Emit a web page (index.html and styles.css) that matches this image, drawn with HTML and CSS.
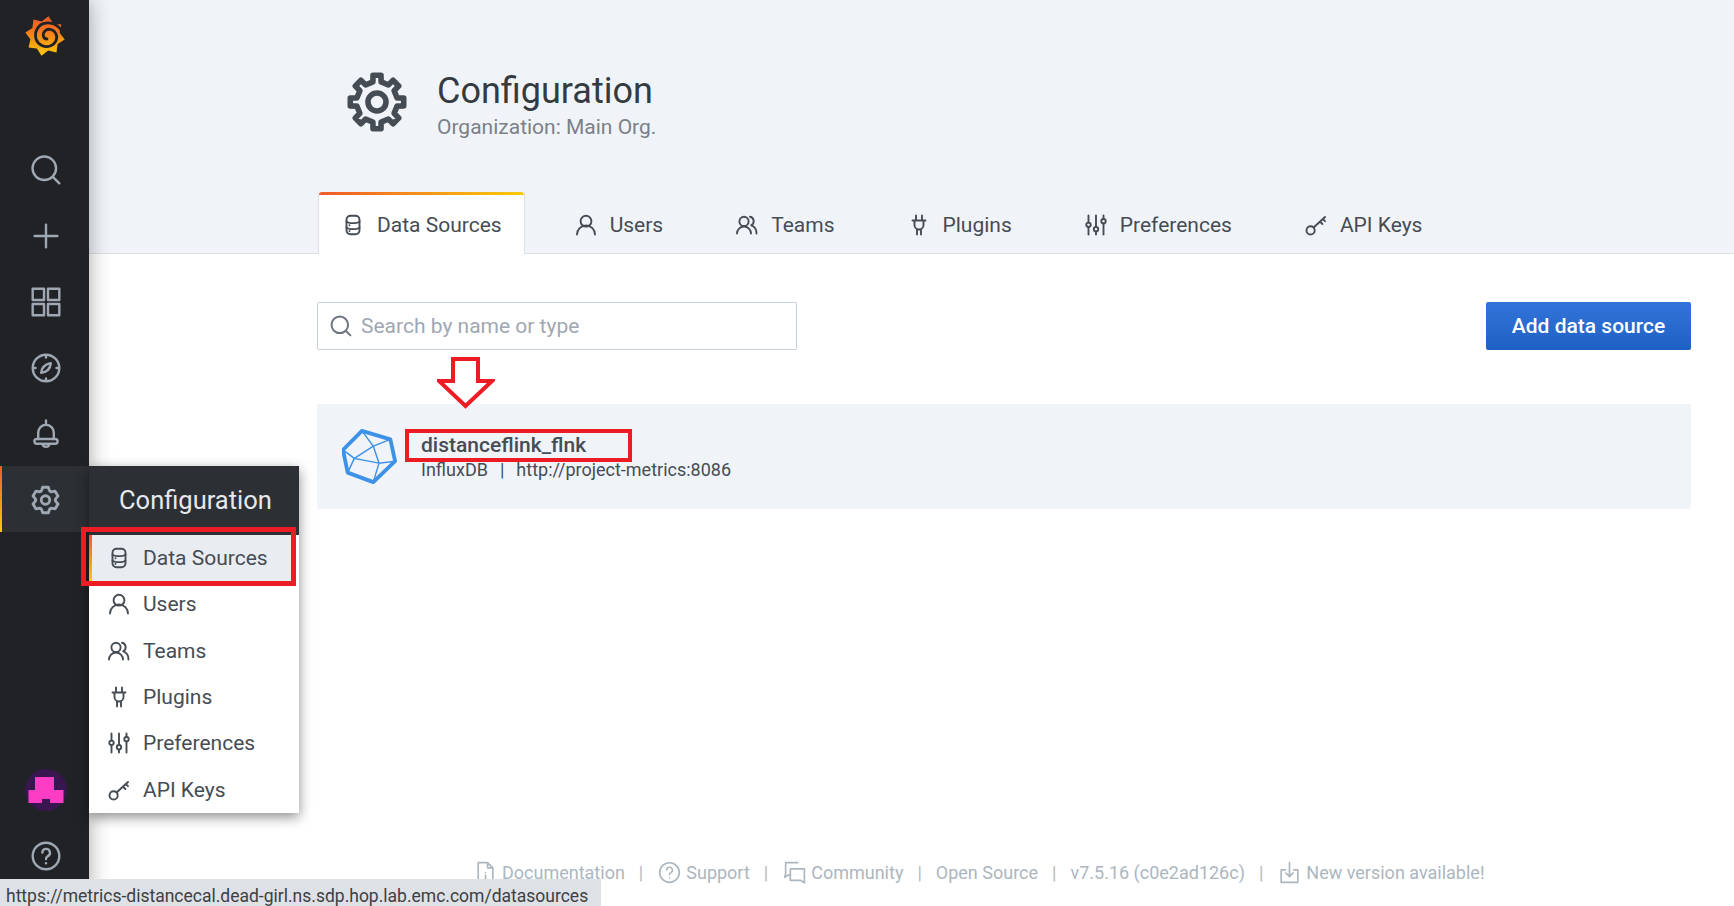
FILE: index.html
```html
<!DOCTYPE html>
<html lang="en">

<head>
    <meta charset="UTF-8">
    <title>Configuration: Data Sources</title>
    <link rel="stylesheet" href="styles.css">
</head>

<body>
    <svg class="sprite" xmlns="http://www.w3.org/2000/svg">
        <symbol id="i-search" viewBox="0 0 24 24"><circle cx="10.8" cy="10.8" r="8.3"/><path d="M17 17l4.4 4.4"/></symbol>
        <symbol id="i-plus" viewBox="0 0 24 24"><path d="M12 4v16M4 12h16"/></symbol>
        <symbol id="i-apps" viewBox="0 0 24 24"><rect x="2.6" y="2.6" width="8" height="8"/><rect x="13.4" y="2.6" width="8" height="8"/><rect x="2.6" y="13.4" width="8" height="8"/><rect x="13.4" y="13.4" width="8" height="8"/></symbol>
        <symbol id="i-compass" viewBox="0 0 24 24"><circle cx="12" cy="12" r="9.4"/><path d="M12 3v1.6M12 19.4V21M3 12h1.6M19.4 12H21"/><path d="M8.6 15.4c.4-3.6 2.6-6 6.8-6.8-.4 4-2.8 6.4-6.8 6.8z"/></symbol>
        <symbol id="i-bell" viewBox="0 0 24 24"><path d="M12 2.5v2.2M6.5 15.5V11a5.5 5.5 0 0 1 11 0v4.5"/><path d="M5.5 15.5h13a1.6 1.6 0 0 1 0 3.4h-13a1.6 1.6 0 0 1 0-3.4z"/><path d="M9.5 19.2a2.6 2.6 0 0 0 5 0"/></symbol>
        <symbol id="i-cog" viewBox="0 0 24 24"><path class="solid" d="M19.9,12.66a1,1,0,0,1,0-1.32L21.18,9.9a1,1,0,0,0,.12-1.17l-2-3.46a1,1,0,0,0-1.07-.48l-1.88.38a1,1,0,0,1-1.15-.66l-.61-1.83A1,1,0,0,0,13.64,2h-4a1,1,0,0,0-1,.68L8.08,4.51a1,1,0,0,1-1.15.66L5,4.79A1,1,0,0,0,4,5.27L2,8.73A1,1,0,0,0,2.1,9.9l1.27,1.44a1,1,0,0,1,0,1.32L2.1,14.1A1,1,0,0,0,2,15.27l2,3.46a1,1,0,0,0,1.07.48l1.88-.38a1,1,0,0,1,1.15.66l.61,1.83a1,1,0,0,0,1,.68h4a1,1,0,0,0,.95-.68l.61-1.83a1,1,0,0,1,1.15-.66l1.88.38a1,1,0,0,0,1.07-.48l2-3.46a1,1,0,0,0-.12-1.17ZM18.41,14l.8.9-1.28,2.22-1.18-.24a3,3,0,0,0-3.45,2L12.92,20H10.36L10,18.86a3,3,0,0,0-3.45-2l-1.18.24L4.07,14.89l.8-.9a3,3,0,0,0,0-4l-.8-.9L5.35,6.89l1.18.24a3,3,0,0,0,3.45-2L10.36,4h2.56l.38,1.14a3,3,0,0,0,3.45,2l1.18-.24,1.28,2.22-.8.9A3,3,0,0,0,18.41,14ZM11.64,8a4,4,0,1,0,4,4A4,4,0,0,0,11.64,8Zm0,6a2,2,0,1,1,2-2A2,2,0,0,1,11.64,14Z"/></symbol>
        <symbol id="i-help" viewBox="0 0 24 24"><circle cx="12" cy="12" r="9.4"/><path d="M9.4 9.6a2.7 2.7 0 1 1 3.9 2.5c-.9.5-1.3 1-1.3 2"/><path d="M12 17v.1"/></symbol>
        <symbol id="i-database" viewBox="0 0 24 24"><rect x="5.5" y="2.8" width="13" height="18.4" rx="4"/><path d="M5.500 8.600c2 2 11 2 13 0M5.500 14.600c2 2 11 2 13 0"/><path d="M8.500 12.200v.1M8.500 18v.1"/></symbol>
        <symbol id="i-user" viewBox="0 0 24 24"><circle cx="12" cy="8.200" r="5.400"/><path d="M3 21.500a9 9 0 0 1 18 0"/></symbol>
        <symbol id="i-users" viewBox="0 0 24 24"><circle cx="9" cy="8.400" r="4.600"/><path d="M2 20.500a7 7 0 0 1 14 0"/><path d="M15 3.800a4.600 4.600 0 0 1 1.200 8.600c3.400 1 5.300 4 5.300 8.100"/></symbol>
        <symbol id="i-plug" viewBox="0 0 24 24"><path d="M9 2.500v5M15 2.500v5M5.500 7.500h13M7.500 7.500v4.500a4.500 4.500 0 0 0 9 0V7.500M10 16.400v5M14 16.400v5"/></symbol>
        <symbol id="i-sliders" viewBox="0 0 24 24"><path d="M4.500 2.500v7M4.500 14v7.500M12 2.500v11.500M12 18.400v3.100M19.500 2.500v3.500M19.500 10.500v11"/><circle cx="4.500" cy="11.800" r="2.200"/><circle cx="12" cy="16.200" r="2.200"/><circle cx="19.500" cy="8.200" r="2.200"/></symbol>
        <symbol id="i-key" viewBox="0 0 24 24"><circle cx="6.600" cy="17.400" r="4.100"/><path d="M9.600 14.500L21 4M16 8.600l2.400 2.400M18.800 6l2.200 2.200"/></symbol>
        <symbol id="i-doc" viewBox="0 0 24 24"><path d="M5 2.500h9l5 5v14H5zM14 2.500v5h5M12 12v.1M12 14.500v4"/></symbol>
        <symbol id="i-comments" viewBox="0 0 24 24"><path d="M15 2.500H3.500v11l-1 3 3.500-2H8"/><path d="M8 8.500h13.500v13.500l-3.500-2.500H8z"/></symbol>
        <symbol id="i-download" viewBox="0 0 24 24"><path d="M8 9.500H4v12h16v-12h-4M12 2.500v13M8.500 12.500l3.500 3.500 3.500-3.500"/></symbol>
    </svg>

    <aside class="sidemenu">
        <a class="sidemenu-logo" href="#">
            <svg width="40" height="42" viewBox="0 0 40 42" xmlns="http://www.w3.org/2000/svg">
                <defs>
                    <linearGradient id="logoFill" x1="0" y1="0" x2="0" y2="1">
                        <stop offset="0" stop-color="#f05a28"/>
                        <stop offset=".3" stop-color="#f4701f"/>
                        <stop offset="1" stop-color="#fbca0a"/>
                    </linearGradient>
                </defs>
                <polygon fill="url(#logoFill)" points="23.5,1.300 28.100,8.400 36.400,9.500 34.600,17.800 39.700,24.500 32.600,29.100 31.500,37.400 23.200,35.600 16.500,40.700 11.900,33.600 3.600,32.500 5.400,24.200 0.300,17.500 7.400,12.900 8.500,4.600 16.800,6.400"/>
                <path class="logo-swirl" d="M37 17C34 10 27 7 21 8 13 9 9 17 11 24c2 6 9 9 14 7 6-2 8-8 6-12-2-5-8-6-11-3-3 3-2 8 2 8"/>
            </svg>
        </a>
        <ul class="sidemenu-list sidemenu-top">
            <li class="sidemenu-item"><svg class="icon icon-side"><use href="#i-search"/></svg></li>
            <li class="sidemenu-item"><svg class="icon icon-side"><use href="#i-plus"/></svg></li>
            <li class="sidemenu-item"><svg class="icon icon-side"><use href="#i-apps"/></svg></li>
            <li class="sidemenu-item"><svg class="icon icon-side"><use href="#i-compass"/></svg></li>
            <li class="sidemenu-item"><svg class="icon icon-side"><use href="#i-bell"/></svg></li>
            <li class="sidemenu-item active">
                <svg class="icon icon-side"><use href="#i-cog"/></svg>
                <div class="dropdown">
                    <div class="dropdown-title">Configuration</div>
                    <a class="dropdown-link current" href="#"><svg class="icon icon-small"><use href="#i-database"/></svg>Data Sources</a>
                    <a class="dropdown-link" href="#"><svg class="icon icon-small"><use href="#i-user"/></svg>Users</a>
                    <a class="dropdown-link" href="#"><svg class="icon icon-small"><use href="#i-users"/></svg>Teams</a>
                    <a class="dropdown-link" href="#"><svg class="icon icon-small"><use href="#i-plug"/></svg>Plugins</a>
                    <a class="dropdown-link" href="#"><svg class="icon icon-small"><use href="#i-sliders"/></svg>Preferences</a>
                    <a class="dropdown-link" href="#"><svg class="icon icon-small"><use href="#i-key"/></svg>API Keys</a>
                </div>
            </li>
        </ul>
        <ul class="sidemenu-list sidemenu-bottom">
            <li class="sidemenu-item">
                <svg width="42" height="42" viewBox="0 0 42 42" xmlns="http://www.w3.org/2000/svg">
                    <circle cx="21" cy="21" r="21" fill="#3a1650"/>
                    <path fill="#ff3dc4" d="M10 8H29V21H38.500V34H25V30H17V34H3.500V21H10Z"/>
                </svg>
            </li>
            <li class="sidemenu-item"><svg class="icon icon-side"><use href="#i-help"/></svg></li>
        </ul>
    </aside>

    <main class="main">
        <header class="page-header">
            <div class="page-title">
                <svg class="page-icon" viewBox="0 0 60 60" xmlns="http://www.w3.org/2000/svg">
                    <polygon points="25.91,9.91 26.01,3.30 33.99,3.30 34.09,9.91 41.31,12.90 46.06,8.30 51.70,13.94 47.10,18.69 50.09,25.91 56.70,26.01 56.70,33.99 50.09,34.09 47.10,41.31 51.70,46.06 46.06,51.70 41.31,47.10 34.09,50.09 33.99,56.70 26.01,56.70 25.91,50.09 18.69,47.10 13.94,51.70 8.30,46.06 12.90,41.31 9.91,34.09 3.30,33.99 3.30,26.01 9.91,25.91 12.90,18.69 8.30,13.94 13.94,8.30 18.69,12.90"/>
                    <circle cx="30" cy="30" r="9"/>
                </svg>
                <div>
                    <h1 class="page-heading">Configuration</h1>
                    <div class="page-sub">Organization: Main Org.</div>
                </div>
            </div>
            <nav class="tabs">
                <a class="tab active" href="#"><svg class="icon icon-small"><use href="#i-database"/></svg>Data Sources</a>
                <a class="tab" href="#"><svg class="icon icon-small"><use href="#i-user"/></svg>Users</a>
                <a class="tab" href="#"><svg class="icon icon-small"><use href="#i-users"/></svg>Teams</a>
                <a class="tab" href="#"><svg class="icon icon-small"><use href="#i-plug"/></svg>Plugins</a>
                <a class="tab" href="#"><svg class="icon icon-small"><use href="#i-sliders"/></svg>Preferences</a>
                <a class="tab" href="#"><svg class="icon icon-small"><use href="#i-key"/></svg>API Keys</a>
            </nav>
        </header>

        <section class="content">
            <div class="toolbar">
                <label class="search">
                    <svg class="icon icon-search"><use href="#i-search"/></svg>
                    <input class="search-input" type="text" placeholder="Search by name or type">
                </label>
                <a class="btn-primary" href="#">Add data source</a>
            </div>

            <div class="card">
                <svg class="card-logo" width="55" height="55" viewBox="0 0 58 58" xmlns="http://www.w3.org/2000/svg">
                    <path class="influx-outer" d="M21 2l30 9 5 23-23 22-27-10-5-24z"/>
                    <path class="influx-inner" d="M21 2l12 16 18-7M33 18l6 18 17-2M39 36l-6 20M39 36l-26-5 20-13M13 31L1 22M13 31L6 46"/>
                </svg>
                <div class="card-text">
                    <div class="card-name">distanceflink_flnk</div>
                    <div class="card-meta"><span>InfluxDB</span><span class="card-sep">|</span><span>http://project-metrics:8086</span></div>
                </div>
                <div class="mark-box mark-name"></div>
            </div>

            <!-- red markup drawn on top of the screenshot -->
            <svg class="mark-arrow" width="58" height="52" viewBox="0 0 58 52" xmlns="http://www.w3.org/2000/svg">
                <path d="M16 2h25v22h14L28.500 49 2 24h14z"/>
            </svg>
        </section>

        <footer class="footer">
            <a class="footer-link" href="#"><svg class="icon icon-foot"><use href="#i-doc"/></svg>Documentation</a>
            <a class="footer-link" href="#"><svg class="icon icon-foot"><use href="#i-help"/></svg>Support</a>
            <a class="footer-link" href="#"><svg class="icon icon-foot"><use href="#i-comments"/></svg>Community</a>
            <a class="footer-link" href="#">Open Source</a>
            <a class="footer-link" href="#">v7.5.16 (c0e2ad126c)</a>
            <a class="footer-link" href="#"><svg class="icon icon-foot"><use href="#i-download"/></svg>New version available!</a>
        </footer>
    </main>

    <div class="status-bar">https://metrics-distancecal.dead-girl.ns.sdp.hop.lab.emc.com/datasources</div>
</body>

</html>
```

FILE: styles.css
```css
*,
*::after,
*::before {
    box-sizing: border-box;
}

html,
body {
    height: 100%;
}

body {
    margin: 0;
    display: flex;
    min-height: 906px;
    overflow: hidden;
    background: #fff;
    color: #464c54;
    font-family: Roboto, "Liberation Sans", sans-serif;
    font-size: 21px;
}

a {
    color: inherit;
    text-decoration: none;
}

.sprite {
    display: none;
}

.icon {
    fill: none;
    stroke: currentColor;
    stroke-linecap: round;
    stroke-linejoin: round;
    stroke-width: 2;
    flex: none;
}

.solid {
    fill: currentColor;
    stroke: none;
}

.icon-side {
    width: 34px;
    height: 34px;
    color: #9fa7b3;
    stroke-width: 1.7;
}

.icon-small {
    width: 24px;
    height: 24px;
    stroke-width: 1.9;
}

.icon-search {
    width: 24px;
    height: 24px;
    color: #6e7580;
}

.icon-foot {
    width: 25px;
    height: 25px;
    margin-right: 4px;
    stroke-width: 1.6;
}

/* left menu */
.sidemenu {
    position: relative;
    z-index: 10;
    flex: none;
    width: 89px;
    display: flex;
    flex-direction: column;
    background: #202226;
    box-shadow: 0 0 20px rgba(0, 0, 0, .35);
}

.sidemenu-logo {
    height: 136px;
    padding-top: 15px;
    display: flex;
    justify-content: center;
    align-items: flex-start;
}

.logo-swirl {
    fill: none;
    stroke: #202226;
    stroke-width: 2.800;
    stroke-linecap: round;
}

.sidemenu-list {
    list-style: none;
    margin: 0;
    padding: 0;
}

.sidemenu-bottom {
    margin-top: auto;
    padding-bottom: 17px;
}

.sidemenu-item {
    position: relative;
    height: 66px;
    padding-left: 2px;
    display: flex;
    align-items: center;
    justify-content: center;
}

.sidemenu-top .sidemenu-item {
    padding-top: 2px;
}

.sidemenu-item.active {
    background: #2c3035;
}

.sidemenu-item.active::before {
    content: "";
    position: absolute;
    left: 0;
    top: 0;
    bottom: 0;
    width: 2px;
    background: linear-gradient(to bottom, #f05a28, #fbca0a);
}

/* the open submenu */
.dropdown {
    position: absolute;
    left: 89px;
    top: 0;
    width: 210px;
    background: #fff;
    box-shadow: 0 4px 12px rgba(0, 0, 0, .45);
}

.dropdown-title {
    height: 69px;
    padding: 0 0 2px 30px;
    display: flex;
    align-items: center;
    background: #2c3035;
    color: #e6e8eb;
    font-size: 25.500px;
}

.dropdown-link {
    height: 46.300px;
    padding-left: 18px;
    display: flex;
    align-items: center;
    gap: 12px;
    font-size: 21px;
}

.dropdown-link.current {
    position: relative;
    background: #e9edf2;
    margin-right: 8px;
}

.dropdown-link.current::before {
    content: "";
    position: absolute;
    left: 0;
    top: 0;
    bottom: 0;
    width: 3px;
    background: linear-gradient(to bottom, #f05a28, #fbca0a);
}

.dropdown-link.current::after {
    content: "";
    position: absolute;
    left: -8px;
    right: -5px;
    top: -8px;
    bottom: -5px;
    border: 5px solid #ed1c24;
}

/* page */
.main {
    flex: 1;
    min-width: 0;
    display: flex;
    flex-direction: column;
}

.page-header {
    height: 254px;
    padding-left: 229px;
    display: flex;
    flex-direction: column;
    background: #f0f4f9;
    border-bottom: 1px solid #dde1e6;
}

.page-title {
    height: 192px;
    flex: none;
    padding: 70px 0 0 29px;
    display: flex;
    align-items: flex-start;
    gap: 30px;
}

.page-icon {
    width: 60px;
    height: 60px;
    margin-top: 2px;
    fill: none;
    stroke: #464c54;
    stroke-width: 5.600;
    stroke-linejoin: round;
}

.page-heading {
    margin: 0;
    color: #343b40;
    font-size: 36px;
    font-weight: 400;
    line-height: 42px;
}

.page-sub {
    margin-top: 2px;
    color: #7b8087;
    font-size: 21px;
    line-height: 26px;
}

.tabs {
    display: flex;
    gap: 26px;
    margin-bottom: -1px;
}

.tab {
    height: 62px;
    padding: 3px 22px 0 22px;
    display: flex;
    align-items: center;
    gap: 12px;
    border: 1px solid transparent;
    border-bottom: 0;
}

.tab.active {
    position: relative;
    background: #fff;
    border-color: #dde1e6;
    border-top: 0;
    border-radius: 3px 3px 0 0;
}

.tab.active::before {
    content: "";
    position: absolute;
    left: 0;
    right: 0;
    top: 0;
    height: 3px;
    border-radius: 3px 3px 0 0;
    background: linear-gradient(to right, #f05a28, #fbca0a);
}

.content {
    position: relative;
    padding: 48px 43px 0 228px;
}

.toolbar {
    display: flex;
    justify-content: space-between;
}

.search {
    width: 480px;
    height: 48px;
    padding-left: 11px;
    display: flex;
    align-items: center;
    gap: 6px;
    border: 1px solid #c7d0d9;
    border-radius: 2px;
    background: #fff;
}

.search-input {
    flex: 1;
    min-width: 0;
    border: 0;
    outline: 0;
    background: none;
    font: inherit;
    color: #464c54;
}

.search-input::placeholder {
    color: #9fa7b3;
    opacity: 1;
}

.btn-primary {
    width: 205px;
    height: 48px;
    display: flex;
    align-items: center;
    justify-content: center;
    border-radius: 2px;
    background: linear-gradient(to bottom, #3274d9, #1f60c4);
    color: #fff;
    font-weight: 500;
}

.mark-arrow {
    position: absolute;
    left: 348px;
    top: 103px;
    fill: #fff;
    stroke: #ed1c24;
    stroke-width: 4;
}

.card {
    position: relative;
    height: 105px;
    margin-top: 54px;
    padding-left: 25px;
    display: flex;
    align-items: center;
    gap: 24px;
    background: #f0f4f9;
    border-radius: 2px;
}

.influx-outer {
    fill: none;
    stroke: #3d92e8;
    stroke-width: 4;
    stroke-linejoin: round;
}

.influx-inner {
    fill: none;
    stroke: #3d92e8;
    stroke-width: 1.500;
}

.card-text {
    margin-top: -1px;
}

.card-name {
    color: #464c54;
    font-weight: 500;
    line-height: 26px;
}

.card-meta {
    display: flex;
    margin-top: 1px;
    color: #464c54;
    font-size: 18px;
    line-height: 22px;
}

.card-sep {
    margin: 0 12px;
}

.mark-box {
    position: absolute;
    border: 4px solid #ed1c24;
}

.mark-name {
    left: 88px;
    top: 25px;
    width: 227px;
    height: 33px;
}

.footer {
    margin-top: auto;
    padding: 0 0 21px 384px;
    display: flex;
    align-items: center;
    color: #acb6bf;
    font-size: 18px;
}

.footer-link {
    display: flex;
    align-items: center;
}

.footer-link + .footer-link::before {
    content: "|";
    margin: 0 14px;
    color: #b5b9bd;
}

.status-bar {
    position: fixed;
    left: 0;
    bottom: 0;
    z-index: 20;
    width: 601px;
    height: 27px;
    padding: 6px 0 0 6px;
    background: #dee1e6;
    color: #3c4043;
    font-size: 17.500px;
    line-height: 22px;
    white-space: nowrap;
    overflow: hidden;
}
```
